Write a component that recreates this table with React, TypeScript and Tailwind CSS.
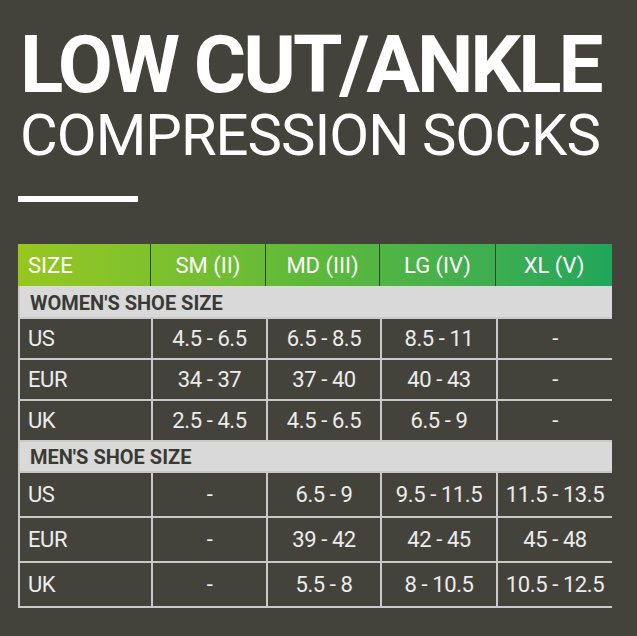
const cols = ['SM (II)', 'MD (III)', 'LG (IV)', 'XL (V)']

const women = [
  ['US', '4.5 - 6.5', '6.5 - 8.5', '8.5 - 11', '-'],
  ['EUR', '34 - 37', '37 - 40', '40 - 43', '-'],
  ['UK', '2.5 - 4.5', '4.5 - 6.5', '6.5 - 9', '-'],
]

const men = [
  ['US', '-', '6.5 - 9', '9.5 - 11.5', '11.5 - 13.5'],
  ['EUR', '-', '39 - 42', '42 - 45', '45 - 48'],
  ['UK', '-', '5.5 - 8', '8 - 10.5', '10.5 - 12.5'],
]

function Section({ title }: { title: string }) {
  return (
    <div className="col-span-5 h-[29px] bg-[#d9d9d9] flex items-center pl-[10px] text-[20px] font-bold text-[#3a3a35]">
      {title}
    </div>
  )
}

function Rows({ rows, h }: { rows: string[][]; h: string }) {
  return (
    <>
      {rows.map((r) =>
        r.map((c, i) => (
          <div
            key={r[0] + i}
            className={`${h} bg-[#44433b] flex items-center text-[22px] text-[#ececec] tracking-[-0.4px] ${
              i === 0 ? 'pl-[8px]' : 'justify-center'
            }`}
          >
            {c}
          </div>
        ))
      )}
    </>
  )
}

export default function App() {
  return (
    <div
      className="w-[637px] h-[636px] bg-[#44433b] overflow-hidden"
      style={{ fontFamily: 'Roboto, "Liberation Sans", sans-serif' }}
    >
      <div className="pt-[26px] pl-[20px]">
        <h1 className="text-[80px] leading-[78px] font-bold text-white tracking-[-3px] whitespace-nowrap">
          LOW CUT/ANKLE
        </h1>
        <h2 className="mt-[2px] text-[58px] leading-[58px] font-normal text-white tracking-[-1px] whitespace-nowrap">
          COMPRESSION SOCKS
        </h2>
        <div className="mt-[32px] ml-[-2px] w-[120px] h-[6px] bg-white" />
      </div>

      <div className="ml-[18px] mt-[42px] w-[594px]">
        <div className="grid grid-cols-[133px_115px_114px_116px_116px] h-[42px] bg-gradient-to-r from-[#97c71e] via-[#5cb93a] to-[#1fa65b] text-white text-[22px]">
          <div className="flex items-center pl-[10px] border-r border-[#2d4a1c]">SIZE</div>
          {cols.map((c, i) => (
            <div
              key={c}
              className={`flex items-center justify-center ${i < 3 ? 'border-r border-[#2d4a1c]' : ''}`}
            >
              {c}
            </div>
          ))}
        </div>
        <div className="grid grid-cols-[131px_113px_112px_114px_114px] gap-[2px] p-[2px] pt-0 bg-[#c9c9c9]">
          <div className="col-span-5 h-[2px] -mb-[2px] bg-[#d9d9d9]" />
          <Section title="WOMEN'S SHOE SIZE" />
          <Rows rows={women} h="h-[39px]" />
          <Section title="MEN'S SHOE SIZE" />
          <Rows rows={men} h="h-[43px]" />
        </div>
      </div>
    </div>
  )
}
